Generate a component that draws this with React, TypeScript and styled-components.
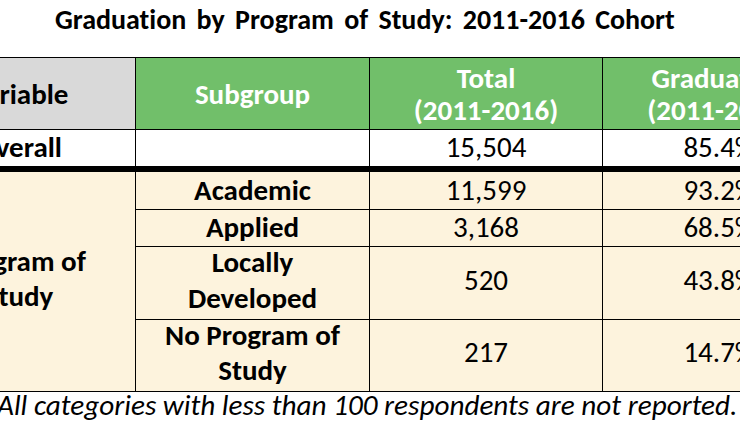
import React from "react";
import styled, { createGlobalStyle } from "styled-components";

const FONT = `"Carlito", "Lato", "Liberation Sans", sans-serif`;

const GlobalStyle = createGlobalStyle`
  html, body {
    margin: 0;
    padding: 0;
    background: #ffffff;
    overflow: hidden;
  }
  body {
    font-family: ${FONT};
    font-variant-ligatures: none;
    color: #000000;
    width: 740px;
    height: 430px;
  }
`;

const Page = styled.div`
  display: flex;
  flex-direction: column;
  width: 740px;
  height: 430px;
  overflow: hidden;
`;

const Title = styled.h1`
  margin: 0;
  padding: 0 0 0 55px;
  font-family: ${FONT};
  font-variant-ligatures: none;
  font-weight: 700;
  font-size: 28px;
  line-height: 40px;
  word-spacing: 4px;
  white-space: nowrap;
  color: #000000;
`;

const Table = styled.div`
  display: grid;
  grid-template-columns: 233px 234px 233px 234px;
  grid-template-rows: 72px 42px 38px 37px 73px 72px;
  margin: 17px 0 0 -97px;
  width: max-content;
  border-top: 1px solid #000000;
`;

type Tone = "gray" | "green" | "white" | "cream";

const toneBg: Record<Tone, string> = {
  gray: "#d9d9d9",
  green: "#71bf6a",
  white: "#ffffff",
  cream: "#fdf3dd",
};

const BaseCell = styled.div<{ $tone: Tone; $thick?: boolean; $span?: number }>`
  box-sizing: border-box;
  display: flex;
  align-items: center;
  justify-content: center;
  text-align: center;
  background: ${(p) => toneBg[p.$tone]};
  border-right: 1px solid #000000;
  border-bottom: ${(p) => (p.$thick ? "6px" : "1px")} solid #000000;
  ${(p) => (p.$span ? `grid-row: span ${p.$span};` : "")}
  font-size: 29px;
  white-space: nowrap;
  overflow: hidden;
`;

const HeadCell = styled(BaseCell)`
  line-height: 32px;
  font-weight: 700;
  color: ${(p) => (p.$tone === "green" ? "#ffffff" : "#000000")};
`;

const BodyCell = styled(BaseCell)<{ $bold?: boolean; $multi?: boolean }>`
  padding-bottom: ${(p) => (p.$multi ? "5px" : "1px")};
  line-height: ${(p) => (p.$multi ? "35.5px" : "35px")};
  font-weight: ${(p) => (p.$bold ? 700 : 400)};
  color: #000000;
`;

const Footnote = styled.p`
  margin: 0 0 0 -3px;
  font-family: ${FONT};
  font-variant-ligatures: none;
  font-style: italic;
  font-size: 29.2px;
  line-height: 26px;
  white-space: nowrap;
  color: #000000;
`;

type Row = { label: React.ReactNode; multi?: boolean; total: string; rate: string };

const rows: Row[] = [
  { label: "Academic", total: "11,599", rate: "93.2%" },
  { label: "Applied", total: "3,168", rate: "68.5%" },
  {
    label: (
      <>
        Locally
        <br />
        Developed
      </>
    ),
    multi: true,
    total: "520",
    rate: "43.8%",
  },
  {
    label: (
      <>
        No Program of
        <br />
        Study
      </>
    ),
    multi: true,
    total: "217",
    rate: "14.7%",
  },
];

export default function App() {
  return (
    <>
      <GlobalStyle />
      <Page>
        <Title>Graduation by Program of Study: 2011-2016 Cohort</Title>
        <Table>
          <HeadCell $tone="gray">Variable</HeadCell>
          <HeadCell $tone="green">Subgroup</HeadCell>
          <HeadCell $tone="green">
            Total
            <br />
            (2011-2016)
          </HeadCell>
          <HeadCell $tone="green">
            Graduation
            <br />
            (2011-2016)
          </HeadCell>

          <BodyCell $tone="white" $bold $thick>
            Overall
          </BodyCell>
          <BodyCell $tone="white" $thick />
          <BodyCell $tone="white" $thick>
            15,504
          </BodyCell>
          <BodyCell $tone="white" $thick>
            85.4%
          </BodyCell>

          <BodyCell $tone="cream" $bold $multi $span={4}>
            Program of
            <br />
            Study
          </BodyCell>
          {rows.map((r, i) => (
            <React.Fragment key={i}>
              <BodyCell $tone="cream" $bold $multi={r.multi}>
                {r.label}
              </BodyCell>
              <BodyCell $tone="cream" $multi={r.multi}>
                {r.total}
              </BodyCell>
              <BodyCell $tone="cream" $multi={r.multi}>
                {r.rate}
              </BodyCell>
            </React.Fragment>
          ))}
        </Table>
        <Footnote>All categories with less than 100 respondents are not reported.</Footnote>
      </Page>
    </>
  );
}
